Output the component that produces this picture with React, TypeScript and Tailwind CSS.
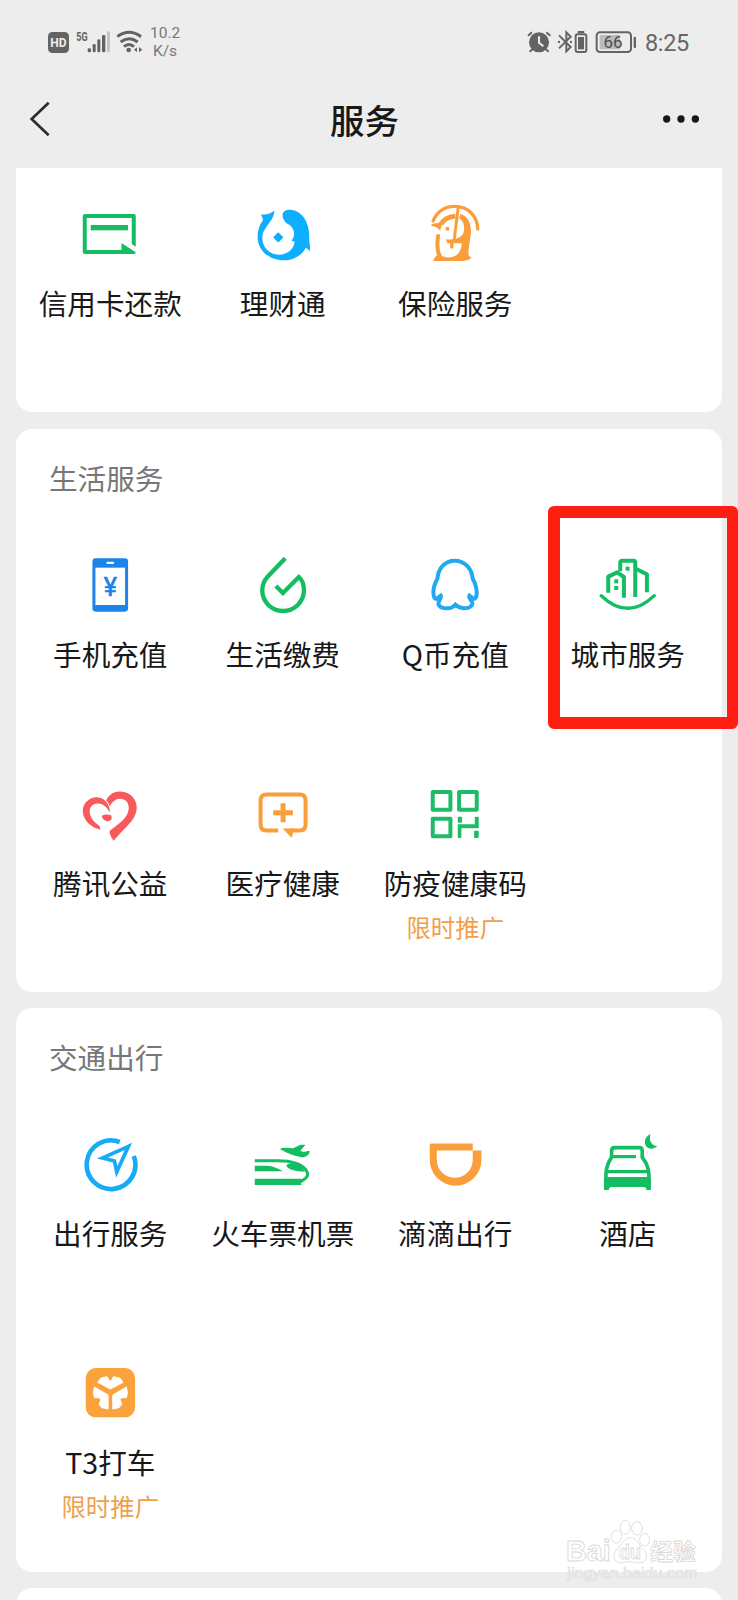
import type { ReactNode } from "react";

const GREEN = "#14bd62";
const BLUE = "#18abf5";
const ORANGE = "#fa9d3b";
const RED = "#f85a5c";
const STATUS = "#636363";

type Service = {
  name: string;
  icon: ReactNode;
  promo?: string;
};

function Icon({ box, children }: { box: string; children: ReactNode }) {
  return (
    <svg viewBox={box} fill="none" className="size-15 shrink-0">
      {children}
    </svg>
  );
}

const CreditCardIcon = () => (
  <Icon box="240.75 102 180 180">
    <path
      d="M256 132H402Q408 132 408 138V230L396 222V144H261V240H365V219L408 247Q407 252 402 252H256Q249 252 249 246V138Q249 132 256 132Z"
      fill={GREEN}
    />
    <rect x="273" y="165" width="112" height="16" fill={GREEN} />
  </Icon>
);

const WealthIcon = () => (
  <Icon box="758.25 102 180 180">
    <path
      d="M822 122C823 146 800 163 789 187C778 220 800 254 836 254C864 253 881 236 883 215L874 212C884 200 886 180 868 165C853 157 847 148 847 135C848 122 860 118 875 120C907 124 928 160 927 200C926 216 931 228 929 243L917 233C903 257 880 271 850 271C805 270 772 240 772 200C772 180 778 165 788 151C788 145 784 140 783 133C797 136 812 130 822 122Z"
      fill="#10aeff"
    />
    <path d="M834 190l12 12-12 12-12-12z" fill="#10aeff" stroke="#10aeff" strokeWidth="5" strokeLinejoin="round" />
  </Icon>
);

const InsuranceIcon = () => (
  <Icon box="168.75 102 180 180">
    <g stroke={ORANGE} strokeLinecap="round">
      <path d="M193 153C205 125 228 109 258 109C300 109 326 140 327 177" strokeWidth="10" />
      <path d="M217 162C226 148 240 140 260 139" strokeWidth="15" strokeLinecap="butt" />
      <path d="M208 198C205 220 203 243 214 259" strokeWidth="12" />
      <path d="M268 115L256 212" strokeWidth="9" />
      <path d="M249 214V231" strokeWidth="10" />
    </g>
    <path
      d="M194 272C195 263 202 258 210 252C225 266 255 266 268 251C275 243 279 230 279 220H236L231 208C250 211 285 205 286 180C287 160 281 150 272 146L274 132C298 135 309 165 306 192C303 220 297 240 300 257L308 263C300 271 285 273 270 273H196Z"
      fill={ORANGE}
    />
    <path d="M188 163L223 155L214 182Q206 170 188 167Z" fill={ORANGE} />
    <circle cx="236" cy="176" r="6" fill={ORANGE} />
  </Icon>
);

const PhoneIcon = () => (
  <Icon box="240.75 375 180 180">
    <rect x="278" y="385" width="107" height="160" rx="10" fill="#1a84ea" />
    <rect x="287" y="413" width="89" height="112" fill="#fff" />
    <rect x="320" y="395" width="23" height="7" rx="3" fill="#fff" />
    <text
      x="332"
      y="499"
      textAnchor="middle"
      fontSize="75"
      fill="#1a84ea"
      stroke="#1a84ea"
      strokeWidth="2"
      className="font-['Roboto',sans-serif]"
    >
      ¥
    </text>
  </Icon>
);

const BillIcon = () => (
  <Icon box="758.25 375 180 180">
    <path
      d="M855 385L802 440C790 453 786 466 786 481A62.5 62 0 0 0 911 481C911 463 905 449 896 441L848 489L827 468"
      stroke={GREEN}
      strokeWidth="13"
    />
  </Icon>
);

const QQIcon = () => (
  <Icon box="168.75 195 180 180">
    <path
      d="M258 212C228 212 208 236 206 266C198 280 193 295 194 310C195 324 199 328 204 326L216 317C220 325 208 330 209 342C212 354 225 355 236 355C248 354 255 350 260 344C266 350 272 354 284 355C296 355 308 353 311 342C311 330 298 324 302 317L314 326C320 328 323 322 324 310C324 295 320 280 312 266C309 236 288 212 258 212Z"
      stroke="#22a9f0"
      strokeWidth="12"
    />
  </Icon>
);

const CityIcon = () => (
  <Icon box="686.25 195 180 180">
    <g stroke={GREEN} strokeWidth="12" strokeLinejoin="round">
      <path d="M753 244V218Q753 212 759 212H793Q798 212 798 218V321" />
      <path d="M717 308V260L744 247L764 261V323" />
      <path d="M801 237L833 253V307" />
      <path d="M696 317Q776 393 855 317" strokeWidth="10" strokeLinecap="round" />
    </g>
    <rect x="735" y="268" width="12" height="12" fill={GREEN} />
    <rect x="735" y="288" width="12" height="12" fill={GREEN} />
    <rect x="769" y="230" width="12" height="12" fill={GREEN} />
  </Icon>
);

const CharityIcon = () => (
  <Icon box="240.75 70.5 180 180">
    <path
      d="M302 208C270 200 249 176 249 150C250 125 272 109 292 110C314 111 330 130 331 156C322 142 312 128 292 129C277 130 268 142 270 157C272 175 288 190 299 196Z"
      fill={RED}
    />
    <path
      d="M319 119C330 100 345 92 362 93C392 95 411 115 411 142C410 180 375 200 342 241C335 230 328 222 330 211C350 195 385 175 387 145C388 125 375 114 360 115C345 116 335 128 330 138C327 128 323 122 319 119Z"
      fill={RED}
    />
    <path d="M306 166Q320 158 335 165L336 175Q330 186 318 181Q308 178 306 166Z" fill={RED} />
  </Icon>
);

const MedicalIcon = () => (
  <Icon box="758.25 70.5 180 180">
    <path
      d="M834 210H799Q781 210 781 192V120Q781 102 799 102H898Q916 102 916 120V192Q916 210 898 210H868"
      stroke={ORANGE}
      strokeWidth="12"
    />
    <path d="M847 204H885L879 215L874 232Z" fill={ORANGE} />
    <path d="M841 128h15v21h22v15h-22v21h-15v-21h-22v-15h22z" fill={ORANGE} />
  </Icon>
);

const HealthCodeIcon = () => (
  <Icon box="168.75 69 180 180">
    <g stroke="#20bb68" strokeWidth="12" strokeLinejoin="round">
      <rect x="192" y="93" width="53" height="53" />
      <rect x="271" y="93" width="53" height="53" />
      <rect x="192" y="173" width="53" height="53" />
    </g>
    <g fill="#20bb68">
      <rect x="267" y="167" width="13" height="18" rx="3" />
      <path d="M267 190H318V170Q318 167 321 167H327Q330 167 330 170V202H278V228Q278 231 275 231H270Q267 231 267 228Z" />
      <rect x="316" y="209" width="14" height="22" rx="3" />
    </g>
  </Icon>
);

const CompassIcon = () => (
  <Icon box="240.75 312 180 180">
    <path d="M360 336A73 73 0 1 0 402 378" stroke={BLUE} strokeWidth="14" />
    <path d="M386 349L308 384L344 393L351 426Z" stroke={BLUE} strokeWidth="11" />
  </Icon>
);

const TrainIcon = () => (
  <Icon box="759.75 312 180 180">
    <path d="M765 392H835C880 392 905 402 919 420C929 436 922 446 898 456" stroke={GREEN} strokeWidth="9" />
    <path d="M765 446H902L918 448L903 461L906 465H765Z" fill={GREEN} />
    <path d="M860 405C870 396 886 397 903 407L916 425C890 424 861 420 860 405Z" fill={GREEN} />
    <path d="M765 407H805C822 409 835 415 849 424H765Z" fill={GREEN} />
    <path
      d="M841 358C848 351 865 354 880 355L902 344L917 344L902 362C910 369 920 362 930 363C930 376 915 384 902 381C880 378 860 369 841 358Z"
      fill={GREEN}
    />
  </Icon>
);

const DidiIcon = () => (
  <Icon box="168.75 103.5 180 180">
    <path
      fillRule="evenodd"
      d="M183 138Q183 132 189 132H312V153H338V181A77.5 77.5 0 0 1 183 181ZM204 153V181A54 54 0 0 0 312 181V153Z"
      fill={ORANGE}
    />
  </Icon>
);

const HotelIcon = () => (
  <Icon box="687.25 102 180 180">
    <path
      d="M711 245V225C711 205 716 190 728 172V153Q728 143 737 143H811Q820 143 820 153V172C834 190 840 205 840 225V245"
      stroke={GREEN}
      strokeWidth="11"
    />
    <path d="M730 170H801M716 215H836" stroke={GREEN} strokeWidth="10" />
    <path d="M718 231H834L846 236V270H832V265L826 261H726L720 265V270H705V236Z" fill={GREEN} />
    <path d="M844 103C840 125 848 136 865 139C850 153 828 146 828 127C828 115 835 107 844 103Z" fill={GREEN} />
  </Icon>
);

const T3Icon = () => (
  <Icon box="240.75 69 180 180">
    <rect x="258" y="84" width="148" height="148" rx="30" fill="#fba23d" />
    <g fill="#fff" stroke="#fff" strokeWidth="3" strokeLinejoin="round">
      <path d="M294 127L304 114L322 110L328 122H335L341 110L360 114L370 127L332 147Z" />
      <path d="M284 141L325 165V207L306 203L298 193L304 177Q298 171 284 173L281 158Z" />
      <path d="M380 141L339 165V207L358 203L366 193L360 177Q366 171 380 173L383 158Z" />
    </g>
  </Icon>
);

const financeServices: Service[] = [
  { name: "信用卡还款", icon: <CreditCardIcon /> },
  { name: "理财通", icon: <WealthIcon /> },
  { name: "保险服务", icon: <InsuranceIcon /> },
];

const lifeServices: Service[] = [
  { name: "手机充值", icon: <PhoneIcon /> },
  { name: "生活缴费", icon: <BillIcon /> },
  { name: "Q币充值", icon: <QQIcon /> },
  { name: "城市服务", icon: <CityIcon /> },
  { name: "腾讯公益", icon: <CharityIcon /> },
  { name: "医疗健康", icon: <MedicalIcon /> },
  { name: "防疫健康码", icon: <HealthCodeIcon />, promo: "限时推广" },
];

const travelServices: Service[] = [
  { name: "出行服务", icon: <CompassIcon /> },
  { name: "火车票机票", icon: <TrainIcon /> },
  { name: "滴滴出行", icon: <DidiIcon /> },
  { name: "酒店", icon: <HotelIcon /> },
  { name: "T3打车", icon: <T3Icon />, promo: "限时推广" },
];

function ServiceGrid({ services }: { services: Service[] }) {
  return (
    <div className="grid grid-cols-4 auto-rows-[228.5px] px-2">
      {services.map((service) => (
        <div key={service.name} className="flex flex-col items-center whitespace-nowrap">
          {service.icon}
          <span className="mt-[21px] text-[28.6px] leading-9 text-[#181818]">{service.name}</span>
          {service.promo && (
            <span className="mt-[11px] text-[24.4px] leading-[30px] text-[#f0a04b]">{service.promo}</span>
          )}
        </div>
      ))}
    </div>
  );
}

function SectionTitle({ children }: { children: ReactNode }) {
  return <h2 className="h-[126px] pt-[31px] pl-[33px] text-[28.6px] leading-9 text-[#777]">{children}</h2>;
}

function StatusBar() {
  return (
    <div className="flex h-[84px] items-center justify-between pr-[49px] pl-12 font-['Roboto',sans-serif]">
      <div className="flex items-center">
        <svg viewBox="144 96 63 63" className="size-[21px]">
          <rect x="144" y="96" width="63" height="63" rx="13" fill={STATUS} />
          <text x="151" y="142" fontSize="38" fontWeight="700" textLength="49" lengthAdjust="spacingAndGlyphs" fill="#ededed">
            HD
          </text>
        </svg>
        <svg viewBox="228 90 102 72" className="ml-[7px] h-6 w-[34px]">
          <text x="229" y="122" fontSize="37" fontWeight="700" textLength="34" lengthAdjust="spacingAndGlyphs" fill={STATUS}>
            5G
          </text>
          <g fill={STATUS}>
            <rect x="263" y="145" width="10" height="12" rx="4" />
            <rect x="278" y="132" width="9" height="25" rx="4" />
            <rect x="292" y="118" width="9" height="39" rx="4" />
            <rect x="306" y="105" width="10" height="52" rx="4" />
          </g>
          <rect x="321" y="94" width="9" height="63" rx="4" fill="#c4c4c4" />
        </svg>
        <svg viewBox="348 90 81 72" fill="none" className="ml-1.5 h-6 w-[27px]">
          <g stroke={STATUS} strokeWidth="9">
            <path d="M352 110Q387 84 423 110" />
            <path d="M362 126Q387 107 413 126" />
            <path d="M372 140Q387 127 402 140" />
          </g>
          <circle cx="386" cy="150" r="7" fill={STATUS} />
          <path d="M402 149l9-7v14zM427 149l-10-8v16z" fill={STATUS} />
        </svg>
        <div className="ml-[7px] w-[30px] text-center text-[15.5px] leading-[18.5px] text-[#777]">
          <div>10.2</div>
          <div>K/s</div>
        </div>
      </div>

      <div className="flex items-center">
        <svg viewBox="478 90 72 72" fill="none" className="size-6">
          <circle cx="514" cy="127" r="30" fill={STATUS} />
          <path d="M514 109V128L527 139" stroke="#ededed" strokeWidth="6" />
          <path d="M481 107L493 97M536 97L548 107M486 155L496 146M543 155L533 146" stroke={STATUS} strokeWidth="6" />
        </svg>
        <svg viewBox="567 90 93 72" fill="none" className="ml-[6px] h-6 w-[31px]">
          <path d="M573 106L608 141L595 154V97L608 110L573 145" stroke={STATUS} strokeWidth="6" />
          <circle cx="573" cy="126" r="3.5" fill={STATUS} />
          <circle cx="609" cy="126" r="3.5" fill={STATUS} />
          <rect x="623" y="103" width="32" height="53" rx="6" stroke={STATUS} strokeWidth="6" />
          <rect x="629" y="93" width="20" height="6" rx="2" fill={STATUS} />
          <rect x="630" y="111" width="18" height="37" fill={STATUS} />
        </svg>
        <svg viewBox="681 90 126 72" fill="none" className="ml-[7px] h-6 w-[42px]">
          <rect x="686" y="97" width="103" height="59" rx="10" stroke={STATUS} strokeWidth="6" />
          <rect x="695" y="105" width="61" height="43" rx="3" fill="#bcbcbc" />
          <rect x="797" y="110" width="7" height="34" rx="3" fill={STATUS} />
          <text x="735" y="145" textAnchor="middle" fontSize="51" fill="#4d4d4d">
            66
          </text>
        </svg>
        <span className="mt-0.5 ml-2 text-[23.5px] leading-7 tracking-[-0.3px] text-[#666]">8:25</span>
      </div>
    </div>
  );
}

function Header() {
  return (
    <header className="flex h-[70px] items-center justify-between pr-[39px] pl-[29px]">
      <svg viewBox="87 300 63 114" fill="none" className="h-[38px] w-[21px]">
        <path d="M146 308L95 357L146 406" stroke="#2b2b2b" strokeWidth="8" />
      </svg>
      <h1 className="ml-4 text-[34.5px] leading-10 font-medium text-[#181818]">服务</h1>
      <svg viewBox="0 0 108 24" className="h-2 w-9" fill="#181818">
        <circle cx="11" cy="12" r="11" />
        <circle cx="54" cy="12" r="11" />
        <circle cx="97" cy="12" r="11" />
      </svg>
    </header>
  );
}

function Watermark() {
  return (
    <svg
      viewBox="0 0 420 200"
      className="absolute top-[1517px] left-[563px] h-[66.7px] w-[140px]"
      fill="#fff"
      stroke="#d8d8d8"
      strokeWidth="2.5"
    >
      <text x="9" y="133" fontSize="86" fontWeight="700" textLength="134" lengthAdjust="spacingAndGlyphs" className="font-['Liberation_Sans',sans-serif]">
        Bai
      </text>
      <ellipse cx="160" cy="59" rx="16" ry="19" />
      <ellipse cx="187" cy="31" rx="15" ry="21" />
      <ellipse cx="222" cy="34" rx="16" ry="20" />
      <ellipse cx="245" cy="68" rx="15" ry="19" />
      <path d="M202 62C222 62 226 82 239 94C254 108 256 130 238 136C222 140 212 134 200 134C188 134 178 140 166 136C148 130 150 108 164 95C178 82 182 62 202 62Z" />
      <text x="168" y="126" fontSize="58" fontWeight="700" textLength="66" lengthAdjust="spacingAndGlyphs" className="font-['Liberation_Sans',sans-serif]">
        du
      </text>
      <text x="262" y="128" fontSize="68" fontWeight="700" textLength="136" lengthAdjust="spacingAndGlyphs">
        经验
      </text>
      <text x="13" y="184" fontSize="42" textLength="390" lengthAdjust="spacingAndGlyphs" stroke="#dedede" strokeWidth="2" fill="#f8f8f8" className="font-['Liberation_Sans',sans-serif]">
        jingyan.baidu.com
      </text>
    </svg>
  );
}

export default function App() {
  return (
    <div className="relative h-[1600px] w-[738px] overflow-hidden bg-[#ededed] font-['Noto_Sans_CJK_SC',sans-serif]">
      <StatusBar />
      <Header />

      <main className="flex flex-col gap-4 px-4 pt-3.5">
        <section className="mb-px h-[244px] rounded-b-2xl bg-white pt-9">
          <ServiceGrid services={financeServices} />
        </section>

        <section className="h-[563px] rounded-2xl bg-white">
          <SectionTitle>生活服务</SectionTitle>
          <ServiceGrid services={lifeServices} />
        </section>

        <section className="h-[564px] rounded-2xl bg-white">
          <SectionTitle>交通出行</SectionTitle>
          <ServiceGrid services={travelServices} />
        </section>

        <section className="h-20 rounded-t-2xl bg-white" />
      </main>

      {/* highlight around 城市服务 */}
      <div className="absolute top-[506px] right-0 h-[223px] w-[190.5px] rounded-md border-[12px] border-r-[11px] border-[#ff1e12]" />
      <Watermark />
    </div>
  );
}
